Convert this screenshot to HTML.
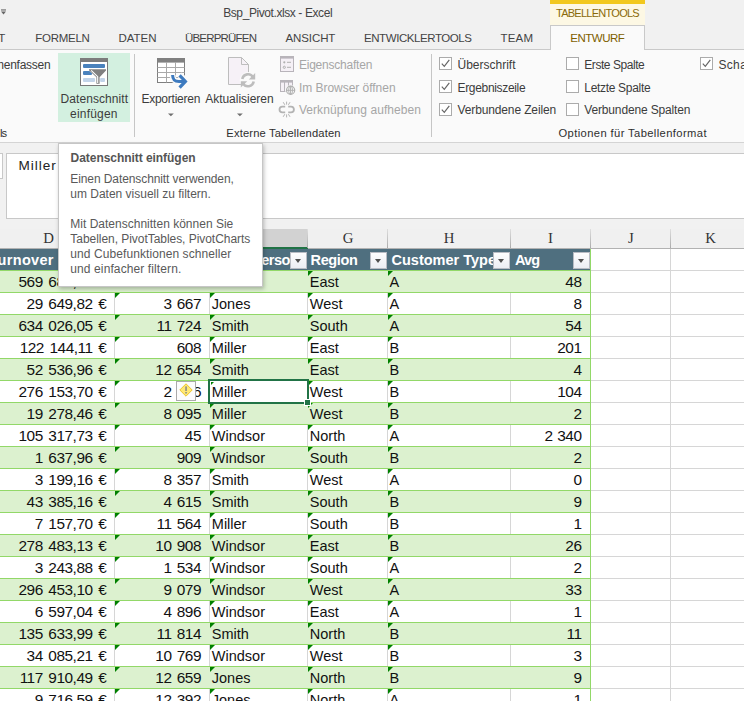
<!DOCTYPE html>
<html lang="de">
<head>
<meta charset="utf-8">
<title>Bsp_Pivot.xlsx - Excel</title>
<style>
html,body{margin:0;padding:0;width:744px;height:701px;overflow:hidden}
body{position:relative;background:#f1f1f1;font-family:"Liberation Sans",sans-serif}
#app{position:absolute;left:0;top:0;width:744px;height:701px;overflow:hidden}
.abs,.t,.row,.vl,.tri,.hl,.cb{position:absolute}
.t{white-space:pre;display:block}
#titlebar{left:0;top:0;width:744px;height:49px;background:#f1f1f1}
#ctxbar{left:550px;top:0;width:95px;height:4px;background:#f2c81e}
#ctxbg{left:550px;top:4px;width:95px;height:21px;background:#fdf8e4}
#ribbon{left:0;top:49px;width:744px;height:94px;background:#fafafa;border-top:1px solid #c9c9c9;border-bottom:1px solid #d4d4d4;box-sizing:border-box}
#tab{left:550px;top:25px;width:95px;height:25px;background:#fafafa;border:1px solid #c9c9c9;border-bottom:none;box-sizing:border-box}
#btnhl{left:58px;top:53px;width:72px;height:69px;background:#d3f0e0}
.sep{width:1px;background:#c6c6c6;top:54px;height:83px}
#fbar{left:6px;top:153px;width:740px;height:66px;background:#fff;border:1px solid #c8c8c8;box-sizing:border-box}
#namebox{left:-10px;top:153px;width:13px;height:26px;background:#fff;border:1px solid #c8c8c8;box-sizing:border-box}
#colhead{left:0;top:229px;width:744px;height:20px;background:#f0f0f0;border-bottom:1px solid #b2b2b2;box-sizing:border-box}
.cs{width:1px;top:229px;height:19px;background:linear-gradient(#dedede,#ababab)}
#colF{left:210px;top:229px;width:98px;height:18px;background:#d2d2d2;border-right:1px solid #b4b4b4;box-sizing:border-box}
#colFb{left:210px;top:247px;width:98px;height:2px;background:#217346}
#sheet{left:0;top:249px;width:744px;height:452px;background:#fff;overflow:hidden}
#grid{left:0;top:0;width:744px;height:701px}
.hl{left:590px;width:154px;height:1px;background:#d6d6d6}
.vg{width:1px;top:249px;height:452px;background:#d6d6d6}
#thead{left:0;top:249px;width:590px;height:22px;background:#4f6f7f;border-bottom:1px solid #92d868;box-sizing:border-box}
.row{left:0;width:590px;height:21px;border-bottom:1px solid #92d868}
.vl{width:1px;height:21px;background:#d6d6d6}
.tri{width:0;height:0;border-top:5px solid #008000;border-right:5px solid transparent}
#tright{left:590px;top:249px;width:1px;height:452px;background:#92d868}
.fb{position:absolute;top:252px;width:17px;height:17px;box-sizing:border-box;border:1px solid #b9bcc4;background:linear-gradient(#fdfdfe,#eceef4);}
.fb:after{content:"";position:absolute;left:4px;top:6px;border-left:3.5px solid transparent;border-right:3.5px solid transparent;border-top:4px solid #505050}
.clip{position:absolute;overflow:hidden;top:249px;height:21px}
.clip span{position:absolute;white-space:pre;color:#fff;font-weight:700;font-size:14.5px;line-height:14.5px;top:3.93px}
#sel{left:208px;top:379px;width:101px;height:25px;border:2px solid #217346;box-sizing:border-box;box-shadow:inset 0 0 0 1px #fff}
#selh{left:304px;top:399px;width:5px;height:5px;background:#217346;border:1px solid #fff;box-sizing:content-box}
#err{left:176px;top:381px;width:20px;height:20px;background:#fcfcfc;border:1px solid #ababab;box-sizing:border-box}
#tip{left:58px;top:143px;width:205px;height:144px;background:#fff;border:1px solid #c6c6c6;box-sizing:border-box;box-shadow:1px 2px 4px rgba(0,0,0,.25)}
.cb{width:13px;height:13px;box-sizing:border-box;border:1px solid #ababab;background:#fff}
.cb svg{position:absolute;left:0;top:0}
svg{position:absolute;overflow:visible}
</style>
</head>
<body>
<div id="app">
<div id="titlebar" class="abs"></div>
<div id="ctxbar" class="abs"></div>
<div id="ctxbg" class="abs"></div>
<div id="ribbon" class="abs"></div>
<div id="tab" class="abs"></div>
<!-- quick access arrow -->
<svg style="left:1px;top:6px" width="8" height="12" viewBox="0 0 8 12"><rect x="0" y="3.4" width="5" height="1.1" fill="#666"/><path d="M0 5.6h5L2.5 8.6z" fill="#666"/></svg>

<div id="btnhl" class="abs"></div>
<div class="abs sep" style="left:134px"></div>
<div class="abs sep" style="left:431px"></div>
<!-- Datenschnitt icon -->
<svg style="left:80px;top:58px" width="28" height="28" viewBox="0 0 28 28">
<rect x=".5" y=".5" width="27" height="27" fill="#fff" stroke="#787878"/>
<rect x="0" y="0" width="28" height="4" fill="#7c7c7c"/>
<rect x="3" y="6" width="22" height="4" rx="1" fill="#4a82bd"/>
<rect x="3" y="13" width="9" height="4" rx="1" fill="#4a82bd"/>
<rect x="3" y="20" width="12" height="4" rx="1" fill="#c2d4e9"/>
<rect x="20" y="20" width="5" height="4" rx="1" fill="#c2d4e9"/>
<path d="M9 11.2H26V12.6L19.6 19.2V25.8H16.4V19.2L9 12.2Z" fill="#808080" stroke="#fff" stroke-width="1" paint-order="stroke"/>
<path d="M11.2 12.4L17.7 18.7V25" fill="none" stroke="#fff" stroke-width="1.1"/>
</svg>
<!-- Exportieren icon -->
<svg style="left:157px;top:58px" width="32" height="32" viewBox="0 0 32 32">
<rect x=".5" y=".5" width="27" height="24" fill="#fff" stroke="#7e7e7e"/>
<rect x="0" y="0" width="28" height="4.6" fill="#808080"/>
<path d="M9.5 4V24.5M18.5 4V24.5M.5 9.5H27.5M.5 14.5H27.5M.5 19.5H27.5" stroke="#a9a9a9" fill="none"/>
<path d="M15.6 17C15.6 21.8 17.6 23.4 22 23.4H27.5" fill="none" stroke="#fafafa" stroke-width="6"/>
<path d="M22.6 16.6L29 23.4 22.6 30.6" fill="none" stroke="#fafafa" stroke-width="6"/>
<path d="M15.6 17C15.6 21.8 17.6 23.4 22 23.4H27.5" fill="none" stroke="#3d7abf" stroke-width="3"/>
<path d="M22.6 17.3L28.4 23.4 22.6 29.6" fill="none" stroke="#3d7abf" stroke-width="3.2"/>
</svg>
<svg style="left:167.6px;top:112.6px" width="8" height="5" viewBox="0 0 8 5"><path d="M0 .4H5.8L2.9 3.3z" fill="#6e6e6e"/></svg>
<!-- Aktualisieren icon -->
<svg style="left:228px;top:57px" width="30" height="32" viewBox="0 0 30 32">
<path d="M.5 .5H13.5L20.5 7.5V27.5H.5Z" fill="#f6f1f7" stroke="#bdbdbd"/>
<path d="M13.5 .5V7.5H20.5" fill="none" stroke="#bdbdbd"/>
<circle cx="20" cy="23.3" r="8.3" fill="#fafafa"/>
<path d="M14.3 22A5.8 5.8 0 0 1 25 20.2" fill="none" stroke="#bdbdbd" stroke-width="2.6"/>
<path d="M25.7 24.6A5.8 5.8 0 0 1 15 26.4" fill="none" stroke="#bdbdbd" stroke-width="2.6"/>
<path d="M27.2 16V22.4H20.8Z" fill="#bdbdbd"/>
<path d="M12.8 30.6V24.2H19.2Z" fill="#bdbdbd"/>
</svg>
<svg style="left:236.6px;top:112.6px" width="8" height="5" viewBox="0 0 8 5"><path d="M0 .4H5.8L2.9 3.3z" fill="#6e6e6e"/></svg>
<!-- small icons -->
<svg style="left:280px;top:56px" width="14" height="16" viewBox="0 0 14 16">
<rect x=".5" y=".5" width="13" height="15" fill="#f5f0f6" stroke="#b8b4ba"/>
<rect x="0" y="0" width="14" height="2.6" fill="#b8b4ba"/>
<circle cx="4.3" cy="6.3" r="1.1" fill="#b0b0b0"/><circle cx="4.3" cy="11.3" r="1.1" fill="none" stroke="#b0b0b0"/>
<path d="M7 6.3H11M7 11.3H11" stroke="#b0b0b0"/>
</svg>
<svg style="left:280px;top:80px" width="17" height="16" viewBox="0 0 17 16">
<rect x=".5" y=".5" width="12" height="11" fill="#f5f0f6" stroke="#b8b4ba"/>
<rect x="0" y="0" width="13" height="2.6" fill="#b8b4ba"/>
<path d="M4.5 2V11.5M8.5 2V11.5" stroke="#b8b4ba"/>
<circle cx="10.6" cy="10.3" r="5.4" fill="#fafafa"/>
<circle cx="10.6" cy="10.3" r="4.1" fill="#fafafa" stroke="#b0b0b0" stroke-width="1.2"/>
<path d="M6.6 10.3H14.6M10.6 6.3V14.3" stroke="#b0b0b0" stroke-width="1"/>
<ellipse cx="10.6" cy="10.3" rx="2" ry="4" fill="none" stroke="#b0b0b0" stroke-width=".9"/>
</svg>
<svg style="left:279px;top:101px" width="16" height="17" viewBox="0 0 16 17">
<path d="M6.2 5.6H3.4A2.9 2.9 0 0 0 3.4 11.4H6.2" fill="none" stroke="#b3b3b3" stroke-width="1.8"/>
<path d="M9.2 5.6H12A2.9 2.9 0 0 1 12 11.4H9.2" fill="none" stroke="#b3b3b3" stroke-width="1.8"/>
<path d="M7.6 .6V3.6M4.2 1.2L5.8 3.8M11 1.2L9.4 3.8M7.6 16.4V13.4M4.2 15.8L5.8 13.2M11 15.8L9.4 13.2" stroke="#b3b3b3" stroke-width="1"/>
</svg>

<!-- checkboxes -->
<div class="cb" style="left:439px;top:57px"><svg width="13" height="13" viewBox="0 0 13 13" style="left:-1px;top:-1px"><path d="M2.8 6.6L5.3 9.3 10.3 2.9" fill="none" stroke="#666" stroke-width="1.2"/></svg></div><div class="cb" style="left:439px;top:80px"><svg width="13" height="13" viewBox="0 0 13 13" style="left:-1px;top:-1px"><path d="M2.8 6.6L5.3 9.3 10.3 2.9" fill="none" stroke="#666" stroke-width="1.2"/></svg></div><div class="cb" style="left:439px;top:103px"><svg width="13" height="13" viewBox="0 0 13 13" style="left:-1px;top:-1px"><path d="M2.8 6.6L5.3 9.3 10.3 2.9" fill="none" stroke="#666" stroke-width="1.2"/></svg></div><div class="cb" style="left:566px;top:57px"></div><div class="cb" style="left:566px;top:80px"></div><div class="cb" style="left:566px;top:103px"></div><div class="cb" style="left:700px;top:57px"><svg width="13" height="13" viewBox="0 0 13 13" style="left:-1px;top:-1px"><path d="M2.8 6.6L5.3 9.3 10.3 2.9" fill="none" stroke="#666" stroke-width="1.2"/></svg></div>

<div id="namebox" class="abs"></div>
<div id="fbar" class="abs"></div>
<div id="colhead" class="abs"></div>
<div id="colF" class="abs"></div><div id="colFb" class="abs"></div>
<div class="abs cs" style="left:114px"></div><div class="abs cs" style="left:209px"></div><div class="abs cs" style="left:307px"></div><div class="abs cs" style="left:387px"></div><div class="abs cs" style="left:510px"></div><div class="abs cs" style="left:590px"></div><div class="abs cs" style="left:670px"></div>

<div id="sheet" class="abs"></div>
<div id="grid" class="abs">
<div class="hl" style="top:270px"></div><div class="hl" style="top:292px"></div><div class="hl" style="top:314px"></div><div class="hl" style="top:336px"></div><div class="hl" style="top:358px"></div><div class="hl" style="top:380px"></div><div class="hl" style="top:402px"></div><div class="hl" style="top:424px"></div><div class="hl" style="top:446px"></div><div class="hl" style="top:468px"></div><div class="hl" style="top:490px"></div><div class="hl" style="top:512px"></div><div class="hl" style="top:534px"></div><div class="hl" style="top:556px"></div><div class="hl" style="top:578px"></div><div class="hl" style="top:600px"></div><div class="hl" style="top:622px"></div><div class="hl" style="top:644px"></div><div class="hl" style="top:666px"></div><div class="hl" style="top:688px"></div>
<div class="abs vg" style="left:670px"></div>
<div id="thead" class="abs"></div>
<div class="row" style="top:271px;background:#dcf1cf"></div>
<div class="row" style="top:293px;background:#fff"></div>
<div class="row" style="top:315px;background:#dcf1cf"></div>
<div class="row" style="top:337px;background:#fff"></div>
<div class="row" style="top:359px;background:#dcf1cf"></div>
<div class="row" style="top:381px;background:#fff"></div>
<div class="row" style="top:403px;background:#dcf1cf"></div>
<div class="row" style="top:425px;background:#fff"></div>
<div class="row" style="top:447px;background:#dcf1cf"></div>
<div class="row" style="top:469px;background:#fff"></div>
<div class="row" style="top:491px;background:#dcf1cf"></div>
<div class="row" style="top:513px;background:#fff"></div>
<div class="row" style="top:535px;background:#dcf1cf"></div>
<div class="row" style="top:557px;background:#fff"></div>
<div class="row" style="top:579px;background:#dcf1cf"></div>
<div class="row" style="top:601px;background:#fff"></div>
<div class="row" style="top:623px;background:#dcf1cf"></div>
<div class="row" style="top:645px;background:#fff"></div>
<div class="row" style="top:667px;background:#dcf1cf"></div>
<div class="row" style="top:689px;background:#fff"></div>
<div class="vl" style="left:114px;top:293px"></div>
<div class="vl" style="left:209px;top:293px"></div>
<div class="vl" style="left:307px;top:293px"></div>
<div class="vl" style="left:387px;top:293px"></div>
<div class="vl" style="left:510px;top:293px"></div>
<div class="vl" style="left:114px;top:337px"></div>
<div class="vl" style="left:209px;top:337px"></div>
<div class="vl" style="left:307px;top:337px"></div>
<div class="vl" style="left:387px;top:337px"></div>
<div class="vl" style="left:510px;top:337px"></div>
<div class="vl" style="left:114px;top:381px"></div>
<div class="vl" style="left:209px;top:381px"></div>
<div class="vl" style="left:307px;top:381px"></div>
<div class="vl" style="left:387px;top:381px"></div>
<div class="vl" style="left:510px;top:381px"></div>
<div class="vl" style="left:114px;top:425px"></div>
<div class="vl" style="left:209px;top:425px"></div>
<div class="vl" style="left:307px;top:425px"></div>
<div class="vl" style="left:387px;top:425px"></div>
<div class="vl" style="left:510px;top:425px"></div>
<div class="vl" style="left:114px;top:469px"></div>
<div class="vl" style="left:209px;top:469px"></div>
<div class="vl" style="left:307px;top:469px"></div>
<div class="vl" style="left:387px;top:469px"></div>
<div class="vl" style="left:510px;top:469px"></div>
<div class="vl" style="left:114px;top:513px"></div>
<div class="vl" style="left:209px;top:513px"></div>
<div class="vl" style="left:307px;top:513px"></div>
<div class="vl" style="left:387px;top:513px"></div>
<div class="vl" style="left:510px;top:513px"></div>
<div class="vl" style="left:114px;top:557px"></div>
<div class="vl" style="left:209px;top:557px"></div>
<div class="vl" style="left:307px;top:557px"></div>
<div class="vl" style="left:387px;top:557px"></div>
<div class="vl" style="left:510px;top:557px"></div>
<div class="vl" style="left:114px;top:601px"></div>
<div class="vl" style="left:209px;top:601px"></div>
<div class="vl" style="left:307px;top:601px"></div>
<div class="vl" style="left:387px;top:601px"></div>
<div class="vl" style="left:510px;top:601px"></div>
<div class="vl" style="left:114px;top:645px"></div>
<div class="vl" style="left:209px;top:645px"></div>
<div class="vl" style="left:307px;top:645px"></div>
<div class="vl" style="left:387px;top:645px"></div>
<div class="vl" style="left:510px;top:645px"></div>
<div class="vl" style="left:114px;top:689px"></div>
<div class="vl" style="left:209px;top:689px"></div>
<div class="vl" style="left:307px;top:689px"></div>
<div class="vl" style="left:387px;top:689px"></div>
<div class="vl" style="left:510px;top:689px"></div>
<i class="tri" style="left:115px;top:271px"></i>
<i class="tri" style="left:210px;top:271px"></i>
<i class="tri" style="left:308px;top:271px"></i>
<i class="tri" style="left:388px;top:271px"></i>
<i class="tri" style="left:115px;top:293px"></i>
<i class="tri" style="left:210px;top:293px"></i>
<i class="tri" style="left:308px;top:293px"></i>
<i class="tri" style="left:388px;top:293px"></i>
<i class="tri" style="left:115px;top:315px"></i>
<i class="tri" style="left:210px;top:315px"></i>
<i class="tri" style="left:308px;top:315px"></i>
<i class="tri" style="left:388px;top:315px"></i>
<i class="tri" style="left:115px;top:337px"></i>
<i class="tri" style="left:210px;top:337px"></i>
<i class="tri" style="left:308px;top:337px"></i>
<i class="tri" style="left:388px;top:337px"></i>
<i class="tri" style="left:115px;top:359px"></i>
<i class="tri" style="left:210px;top:359px"></i>
<i class="tri" style="left:308px;top:359px"></i>
<i class="tri" style="left:388px;top:359px"></i>
<i class="tri" style="left:115px;top:381px"></i>
<i class="tri" style="left:210px;top:381px"></i>
<i class="tri" style="left:308px;top:381px"></i>
<i class="tri" style="left:388px;top:381px"></i>
<i class="tri" style="left:115px;top:403px"></i>
<i class="tri" style="left:210px;top:403px"></i>
<i class="tri" style="left:308px;top:403px"></i>
<i class="tri" style="left:388px;top:403px"></i>
<i class="tri" style="left:115px;top:425px"></i>
<i class="tri" style="left:210px;top:425px"></i>
<i class="tri" style="left:308px;top:425px"></i>
<i class="tri" style="left:388px;top:425px"></i>
<i class="tri" style="left:115px;top:447px"></i>
<i class="tri" style="left:210px;top:447px"></i>
<i class="tri" style="left:308px;top:447px"></i>
<i class="tri" style="left:388px;top:447px"></i>
<i class="tri" style="left:115px;top:469px"></i>
<i class="tri" style="left:210px;top:469px"></i>
<i class="tri" style="left:308px;top:469px"></i>
<i class="tri" style="left:388px;top:469px"></i>
<i class="tri" style="left:115px;top:491px"></i>
<i class="tri" style="left:210px;top:491px"></i>
<i class="tri" style="left:308px;top:491px"></i>
<i class="tri" style="left:388px;top:491px"></i>
<i class="tri" style="left:115px;top:513px"></i>
<i class="tri" style="left:210px;top:513px"></i>
<i class="tri" style="left:308px;top:513px"></i>
<i class="tri" style="left:388px;top:513px"></i>
<i class="tri" style="left:115px;top:535px"></i>
<i class="tri" style="left:210px;top:535px"></i>
<i class="tri" style="left:308px;top:535px"></i>
<i class="tri" style="left:388px;top:535px"></i>
<i class="tri" style="left:115px;top:557px"></i>
<i class="tri" style="left:210px;top:557px"></i>
<i class="tri" style="left:308px;top:557px"></i>
<i class="tri" style="left:388px;top:557px"></i>
<i class="tri" style="left:115px;top:579px"></i>
<i class="tri" style="left:210px;top:579px"></i>
<i class="tri" style="left:308px;top:579px"></i>
<i class="tri" style="left:388px;top:579px"></i>
<i class="tri" style="left:115px;top:601px"></i>
<i class="tri" style="left:210px;top:601px"></i>
<i class="tri" style="left:308px;top:601px"></i>
<i class="tri" style="left:388px;top:601px"></i>
<i class="tri" style="left:115px;top:623px"></i>
<i class="tri" style="left:210px;top:623px"></i>
<i class="tri" style="left:308px;top:623px"></i>
<i class="tri" style="left:388px;top:623px"></i>
<i class="tri" style="left:115px;top:645px"></i>
<i class="tri" style="left:210px;top:645px"></i>
<i class="tri" style="left:308px;top:645px"></i>
<i class="tri" style="left:388px;top:645px"></i>
<i class="tri" style="left:115px;top:667px"></i>
<i class="tri" style="left:210px;top:667px"></i>
<i class="tri" style="left:308px;top:667px"></i>
<i class="tri" style="left:388px;top:667px"></i>
<i class="tri" style="left:115px;top:689px"></i>
<i class="tri" style="left:210px;top:689px"></i>
<i class="tri" style="left:308px;top:689px"></i>
<i class="tri" style="left:388px;top:689px"></i>
<div id="tright" class="abs"></div>
<div class="clip" style="left:209px;width:81px"><span style="left:8.5px;letter-spacing:-.5px">Salesperson</span></div>
<div class="clip" style="left:387px;width:106px"><span style="left:4.5px">Customer Type</span></div>
<div class="fb" style="left:290px"></div>
<div class="fb" style="left:370px"></div>
<div class="fb" style="left:493px"></div>
<div class="fb" style="left:573px"></div>
<span class="t" style="top:252.93px;font-size:14.5px;line-height:14.5px;color:#fff;font-weight:700;letter-spacing:0.317px;left:-10.50px;">Turnover</span>
<span class="t" style="top:252.93px;font-size:14.5px;line-height:14.5px;color:#fff;font-weight:700;letter-spacing:-0.388px;left:310.60px;">Region</span>
<span class="t" style="top:252.93px;font-size:14.5px;line-height:14.5px;color:#fff;font-weight:700;letter-spacing:-0.930px;left:515.00px;">Avg</span>
<span class="t" style="top:273.96px;font-size:15.4px;line-height:15.4px;color:#111;letter-spacing:-0.480px;word-spacing:1.8px;right:637.78px;">569 687,35 €</span>
<span class="t" style="top:273.96px;font-size:15.4px;line-height:15.4px;color:#111;letter-spacing:-0.480px;word-spacing:1.5px;right:542.98px;">7 891</span>
<span class="t" style="top:274.73px;font-size:14.5px;line-height:14.5px;color:#111;left:211.80px;">Jones</span>
<span class="t" style="top:274.73px;font-size:14.5px;line-height:14.5px;color:#111;left:309.80px;">East</span>
<span class="t" style="top:274.73px;font-size:14.5px;line-height:14.5px;color:#111;left:389.60px;">A</span>
<span class="t" style="top:273.96px;font-size:15.4px;line-height:15.4px;color:#111;letter-spacing:-0.480px;word-spacing:1.0px;right:162.48px;">48</span>
<span class="t" style="top:295.96px;font-size:15.4px;line-height:15.4px;color:#111;letter-spacing:-0.480px;word-spacing:1.8px;right:637.78px;">29 649,82 €</span>
<span class="t" style="top:295.96px;font-size:15.4px;line-height:15.4px;color:#111;letter-spacing:-0.480px;word-spacing:1.5px;right:542.98px;">3 667</span>
<span class="t" style="top:296.73px;font-size:14.5px;line-height:14.5px;color:#111;left:211.80px;">Jones</span>
<span class="t" style="top:296.73px;font-size:14.5px;line-height:14.5px;color:#111;left:309.80px;">West</span>
<span class="t" style="top:296.73px;font-size:14.5px;line-height:14.5px;color:#111;left:389.60px;">A</span>
<span class="t" style="top:295.96px;font-size:15.4px;line-height:15.4px;color:#111;letter-spacing:-0.480px;word-spacing:1.0px;right:162.48px;">8</span>
<span class="t" style="top:317.96px;font-size:15.4px;line-height:15.4px;color:#111;letter-spacing:-0.480px;word-spacing:1.8px;right:637.78px;">634 026,05 €</span>
<span class="t" style="top:317.96px;font-size:15.4px;line-height:15.4px;color:#111;letter-spacing:-0.480px;word-spacing:1.5px;right:542.98px;">11 724</span>
<span class="t" style="top:318.73px;font-size:14.5px;line-height:14.5px;color:#111;left:211.80px;">Smith</span>
<span class="t" style="top:318.73px;font-size:14.5px;line-height:14.5px;color:#111;left:309.80px;">South</span>
<span class="t" style="top:318.73px;font-size:14.5px;line-height:14.5px;color:#111;left:389.60px;">A</span>
<span class="t" style="top:317.96px;font-size:15.4px;line-height:15.4px;color:#111;letter-spacing:-0.480px;word-spacing:1.0px;right:162.48px;">54</span>
<span class="t" style="top:339.96px;font-size:15.4px;line-height:15.4px;color:#111;letter-spacing:-0.480px;word-spacing:1.8px;right:637.78px;">122 144,11 €</span>
<span class="t" style="top:339.96px;font-size:15.4px;line-height:15.4px;color:#111;letter-spacing:-0.480px;word-spacing:1.5px;right:542.98px;">608</span>
<span class="t" style="top:340.73px;font-size:14.5px;line-height:14.5px;color:#111;left:211.80px;">Miller</span>
<span class="t" style="top:340.73px;font-size:14.5px;line-height:14.5px;color:#111;left:309.80px;">East</span>
<span class="t" style="top:340.73px;font-size:14.5px;line-height:14.5px;color:#111;left:389.60px;">B</span>
<span class="t" style="top:339.96px;font-size:15.4px;line-height:15.4px;color:#111;letter-spacing:-0.480px;word-spacing:1.0px;right:162.48px;">201</span>
<span class="t" style="top:361.96px;font-size:15.4px;line-height:15.4px;color:#111;letter-spacing:-0.480px;word-spacing:1.8px;right:637.78px;">52 536,96 €</span>
<span class="t" style="top:361.96px;font-size:15.4px;line-height:15.4px;color:#111;letter-spacing:-0.480px;word-spacing:1.5px;right:542.98px;">12 654</span>
<span class="t" style="top:362.73px;font-size:14.5px;line-height:14.5px;color:#111;left:211.80px;">Smith</span>
<span class="t" style="top:362.73px;font-size:14.5px;line-height:14.5px;color:#111;left:309.80px;">East</span>
<span class="t" style="top:362.73px;font-size:14.5px;line-height:14.5px;color:#111;left:389.60px;">B</span>
<span class="t" style="top:361.96px;font-size:15.4px;line-height:15.4px;color:#111;letter-spacing:-0.480px;word-spacing:1.0px;right:162.48px;">4</span>
<span class="t" style="top:383.96px;font-size:15.4px;line-height:15.4px;color:#111;letter-spacing:-0.480px;word-spacing:1.8px;right:637.78px;">276 153,70 €</span>
<span class="t" style="top:383.96px;font-size:15.4px;line-height:15.4px;color:#111;letter-spacing:-0.480px;word-spacing:1.5px;right:542.98px;">2 386</span>
<span class="t" style="top:384.73px;font-size:14.5px;line-height:14.5px;color:#111;left:211.80px;">Miller</span>
<span class="t" style="top:384.73px;font-size:14.5px;line-height:14.5px;color:#111;left:309.80px;">West</span>
<span class="t" style="top:384.73px;font-size:14.5px;line-height:14.5px;color:#111;left:389.60px;">B</span>
<span class="t" style="top:383.96px;font-size:15.4px;line-height:15.4px;color:#111;letter-spacing:-0.480px;word-spacing:1.0px;right:162.48px;">104</span>
<span class="t" style="top:405.96px;font-size:15.4px;line-height:15.4px;color:#111;letter-spacing:-0.480px;word-spacing:1.8px;right:637.78px;">19 278,46 €</span>
<span class="t" style="top:405.96px;font-size:15.4px;line-height:15.4px;color:#111;letter-spacing:-0.480px;word-spacing:1.5px;right:542.98px;">8 095</span>
<span class="t" style="top:406.73px;font-size:14.5px;line-height:14.5px;color:#111;left:211.80px;">Miller</span>
<span class="t" style="top:406.73px;font-size:14.5px;line-height:14.5px;color:#111;left:309.80px;">West</span>
<span class="t" style="top:406.73px;font-size:14.5px;line-height:14.5px;color:#111;left:389.60px;">B</span>
<span class="t" style="top:405.96px;font-size:15.4px;line-height:15.4px;color:#111;letter-spacing:-0.480px;word-spacing:1.0px;right:162.48px;">2</span>
<span class="t" style="top:427.96px;font-size:15.4px;line-height:15.4px;color:#111;letter-spacing:-0.480px;word-spacing:1.8px;right:637.78px;">105 317,73 €</span>
<span class="t" style="top:427.96px;font-size:15.4px;line-height:15.4px;color:#111;letter-spacing:-0.480px;word-spacing:1.5px;right:542.98px;">45</span>
<span class="t" style="top:428.73px;font-size:14.5px;line-height:14.5px;color:#111;left:211.80px;">Windsor</span>
<span class="t" style="top:428.73px;font-size:14.5px;line-height:14.5px;color:#111;left:309.80px;">North</span>
<span class="t" style="top:428.73px;font-size:14.5px;line-height:14.5px;color:#111;left:389.60px;">A</span>
<span class="t" style="top:427.96px;font-size:15.4px;line-height:15.4px;color:#111;letter-spacing:-0.480px;word-spacing:1.0px;right:162.48px;">2 340</span>
<span class="t" style="top:449.96px;font-size:15.4px;line-height:15.4px;color:#111;letter-spacing:-0.480px;word-spacing:1.8px;right:637.78px;">1 637,96 €</span>
<span class="t" style="top:449.96px;font-size:15.4px;line-height:15.4px;color:#111;letter-spacing:-0.480px;word-spacing:1.5px;right:542.98px;">909</span>
<span class="t" style="top:450.73px;font-size:14.5px;line-height:14.5px;color:#111;left:211.80px;">Windsor</span>
<span class="t" style="top:450.73px;font-size:14.5px;line-height:14.5px;color:#111;left:309.80px;">South</span>
<span class="t" style="top:450.73px;font-size:14.5px;line-height:14.5px;color:#111;left:389.60px;">B</span>
<span class="t" style="top:449.96px;font-size:15.4px;line-height:15.4px;color:#111;letter-spacing:-0.480px;word-spacing:1.0px;right:162.48px;">2</span>
<span class="t" style="top:471.96px;font-size:15.4px;line-height:15.4px;color:#111;letter-spacing:-0.480px;word-spacing:1.8px;right:637.78px;">3 199,16 €</span>
<span class="t" style="top:471.96px;font-size:15.4px;line-height:15.4px;color:#111;letter-spacing:-0.480px;word-spacing:1.5px;right:542.98px;">8 357</span>
<span class="t" style="top:472.73px;font-size:14.5px;line-height:14.5px;color:#111;left:211.80px;">Smith</span>
<span class="t" style="top:472.73px;font-size:14.5px;line-height:14.5px;color:#111;left:309.80px;">West</span>
<span class="t" style="top:472.73px;font-size:14.5px;line-height:14.5px;color:#111;left:389.60px;">A</span>
<span class="t" style="top:471.96px;font-size:15.4px;line-height:15.4px;color:#111;letter-spacing:-0.480px;word-spacing:1.0px;right:162.48px;">0</span>
<span class="t" style="top:493.96px;font-size:15.4px;line-height:15.4px;color:#111;letter-spacing:-0.480px;word-spacing:1.8px;right:637.78px;">43 385,16 €</span>
<span class="t" style="top:493.96px;font-size:15.4px;line-height:15.4px;color:#111;letter-spacing:-0.480px;word-spacing:1.5px;right:542.98px;">4 615</span>
<span class="t" style="top:494.73px;font-size:14.5px;line-height:14.5px;color:#111;left:211.80px;">Smith</span>
<span class="t" style="top:494.73px;font-size:14.5px;line-height:14.5px;color:#111;left:309.80px;">South</span>
<span class="t" style="top:494.73px;font-size:14.5px;line-height:14.5px;color:#111;left:389.60px;">B</span>
<span class="t" style="top:493.96px;font-size:15.4px;line-height:15.4px;color:#111;letter-spacing:-0.480px;word-spacing:1.0px;right:162.48px;">9</span>
<span class="t" style="top:515.96px;font-size:15.4px;line-height:15.4px;color:#111;letter-spacing:-0.480px;word-spacing:1.8px;right:637.78px;">7 157,70 €</span>
<span class="t" style="top:515.96px;font-size:15.4px;line-height:15.4px;color:#111;letter-spacing:-0.480px;word-spacing:1.5px;right:542.98px;">11 564</span>
<span class="t" style="top:516.73px;font-size:14.5px;line-height:14.5px;color:#111;left:211.80px;">Miller</span>
<span class="t" style="top:516.73px;font-size:14.5px;line-height:14.5px;color:#111;left:309.80px;">South</span>
<span class="t" style="top:516.73px;font-size:14.5px;line-height:14.5px;color:#111;left:389.60px;">B</span>
<span class="t" style="top:515.96px;font-size:15.4px;line-height:15.4px;color:#111;letter-spacing:-0.480px;word-spacing:1.0px;right:162.48px;">1</span>
<span class="t" style="top:537.96px;font-size:15.4px;line-height:15.4px;color:#111;letter-spacing:-0.480px;word-spacing:1.8px;right:637.78px;">278 483,13 €</span>
<span class="t" style="top:537.96px;font-size:15.4px;line-height:15.4px;color:#111;letter-spacing:-0.480px;word-spacing:1.5px;right:542.98px;">10 908</span>
<span class="t" style="top:538.73px;font-size:14.5px;line-height:14.5px;color:#111;left:211.80px;">Windsor</span>
<span class="t" style="top:538.73px;font-size:14.5px;line-height:14.5px;color:#111;left:309.80px;">East</span>
<span class="t" style="top:538.73px;font-size:14.5px;line-height:14.5px;color:#111;left:389.60px;">B</span>
<span class="t" style="top:537.96px;font-size:15.4px;line-height:15.4px;color:#111;letter-spacing:-0.480px;word-spacing:1.0px;right:162.48px;">26</span>
<span class="t" style="top:559.96px;font-size:15.4px;line-height:15.4px;color:#111;letter-spacing:-0.480px;word-spacing:1.8px;right:637.78px;">3 243,88 €</span>
<span class="t" style="top:559.96px;font-size:15.4px;line-height:15.4px;color:#111;letter-spacing:-0.480px;word-spacing:1.5px;right:542.98px;">1 534</span>
<span class="t" style="top:560.73px;font-size:14.5px;line-height:14.5px;color:#111;left:211.80px;">Windsor</span>
<span class="t" style="top:560.73px;font-size:14.5px;line-height:14.5px;color:#111;left:309.80px;">South</span>
<span class="t" style="top:560.73px;font-size:14.5px;line-height:14.5px;color:#111;left:389.60px;">A</span>
<span class="t" style="top:559.96px;font-size:15.4px;line-height:15.4px;color:#111;letter-spacing:-0.480px;word-spacing:1.0px;right:162.48px;">2</span>
<span class="t" style="top:581.96px;font-size:15.4px;line-height:15.4px;color:#111;letter-spacing:-0.480px;word-spacing:1.8px;right:637.78px;">296 453,10 €</span>
<span class="t" style="top:581.96px;font-size:15.4px;line-height:15.4px;color:#111;letter-spacing:-0.480px;word-spacing:1.5px;right:542.98px;">9 079</span>
<span class="t" style="top:582.73px;font-size:14.5px;line-height:14.5px;color:#111;left:211.80px;">Windsor</span>
<span class="t" style="top:582.73px;font-size:14.5px;line-height:14.5px;color:#111;left:309.80px;">West</span>
<span class="t" style="top:582.73px;font-size:14.5px;line-height:14.5px;color:#111;left:389.60px;">A</span>
<span class="t" style="top:581.96px;font-size:15.4px;line-height:15.4px;color:#111;letter-spacing:-0.480px;word-spacing:1.0px;right:162.48px;">33</span>
<span class="t" style="top:603.96px;font-size:15.4px;line-height:15.4px;color:#111;letter-spacing:-0.480px;word-spacing:1.8px;right:637.78px;">6 597,04 €</span>
<span class="t" style="top:603.96px;font-size:15.4px;line-height:15.4px;color:#111;letter-spacing:-0.480px;word-spacing:1.5px;right:542.98px;">4 896</span>
<span class="t" style="top:604.73px;font-size:14.5px;line-height:14.5px;color:#111;left:211.80px;">Windsor</span>
<span class="t" style="top:604.73px;font-size:14.5px;line-height:14.5px;color:#111;left:309.80px;">East</span>
<span class="t" style="top:604.73px;font-size:14.5px;line-height:14.5px;color:#111;left:389.60px;">A</span>
<span class="t" style="top:603.96px;font-size:15.4px;line-height:15.4px;color:#111;letter-spacing:-0.480px;word-spacing:1.0px;right:162.48px;">1</span>
<span class="t" style="top:625.96px;font-size:15.4px;line-height:15.4px;color:#111;letter-spacing:-0.480px;word-spacing:1.8px;right:637.78px;">135 633,99 €</span>
<span class="t" style="top:625.96px;font-size:15.4px;line-height:15.4px;color:#111;letter-spacing:-0.480px;word-spacing:1.5px;right:542.98px;">11 814</span>
<span class="t" style="top:626.73px;font-size:14.5px;line-height:14.5px;color:#111;left:211.80px;">Smith</span>
<span class="t" style="top:626.73px;font-size:14.5px;line-height:14.5px;color:#111;left:309.80px;">North</span>
<span class="t" style="top:626.73px;font-size:14.5px;line-height:14.5px;color:#111;left:389.60px;">B</span>
<span class="t" style="top:625.96px;font-size:15.4px;line-height:15.4px;color:#111;letter-spacing:-0.480px;word-spacing:1.0px;right:162.48px;">11</span>
<span class="t" style="top:647.96px;font-size:15.4px;line-height:15.4px;color:#111;letter-spacing:-0.480px;word-spacing:1.8px;right:637.78px;">34 085,21 €</span>
<span class="t" style="top:647.96px;font-size:15.4px;line-height:15.4px;color:#111;letter-spacing:-0.480px;word-spacing:1.5px;right:542.98px;">10 769</span>
<span class="t" style="top:648.73px;font-size:14.5px;line-height:14.5px;color:#111;left:211.80px;">Windsor</span>
<span class="t" style="top:648.73px;font-size:14.5px;line-height:14.5px;color:#111;left:309.80px;">West</span>
<span class="t" style="top:648.73px;font-size:14.5px;line-height:14.5px;color:#111;left:389.60px;">B</span>
<span class="t" style="top:647.96px;font-size:15.4px;line-height:15.4px;color:#111;letter-spacing:-0.480px;word-spacing:1.0px;right:162.48px;">3</span>
<span class="t" style="top:669.96px;font-size:15.4px;line-height:15.4px;color:#111;letter-spacing:-0.480px;word-spacing:1.8px;right:637.78px;">117 910,49 €</span>
<span class="t" style="top:669.96px;font-size:15.4px;line-height:15.4px;color:#111;letter-spacing:-0.480px;word-spacing:1.5px;right:542.98px;">12 659</span>
<span class="t" style="top:670.73px;font-size:14.5px;line-height:14.5px;color:#111;left:211.80px;">Jones</span>
<span class="t" style="top:670.73px;font-size:14.5px;line-height:14.5px;color:#111;left:309.80px;">North</span>
<span class="t" style="top:670.73px;font-size:14.5px;line-height:14.5px;color:#111;left:389.60px;">B</span>
<span class="t" style="top:669.96px;font-size:15.4px;line-height:15.4px;color:#111;letter-spacing:-0.480px;word-spacing:1.0px;right:162.48px;">9</span>
<span class="t" style="top:691.96px;font-size:15.4px;line-height:15.4px;color:#111;letter-spacing:-0.480px;word-spacing:1.8px;right:637.78px;">9 716,59 €</span>
<span class="t" style="top:691.96px;font-size:15.4px;line-height:15.4px;color:#111;letter-spacing:-0.480px;word-spacing:1.5px;right:542.98px;">12 392</span>
<span class="t" style="top:692.73px;font-size:14.5px;line-height:14.5px;color:#111;left:211.80px;">Jones</span>
<span class="t" style="top:692.73px;font-size:14.5px;line-height:14.5px;color:#111;left:309.80px;">North</span>
<span class="t" style="top:692.73px;font-size:14.5px;line-height:14.5px;color:#111;left:389.60px;">A</span>
<span class="t" style="top:691.96px;font-size:15.4px;line-height:15.4px;color:#111;letter-spacing:-0.480px;word-spacing:1.0px;right:162.48px;">1</span>
<div id="sel" class="abs"></div>
<div id="selh" class="abs"></div>
<div id="err" class="abs"><svg style="left:2px;top:1.3px" width="14" height="14" viewBox="0 0 14 14"><path d="M7 .8L13.2 7 7 13.2.8 7z" fill="#ffe873" stroke="#ecc52c" stroke-width="1"/><rect x="6.3" y="3.4" width="1.5" height="4.6" fill="#858585"/><rect x="6.3" y="9" width="1.5" height="1.5" fill="#858585"/></svg></div>
</div>
<span class="t" style="top:6.64px;font-size:12px;line-height:12px;color:#444;letter-spacing:-0.412px;left:223.20px;">Bsp_Pivot.xlsx - Excel</span>
<span class="t" style="top:32.67px;font-size:11.5px;line-height:11.5px;color:#444;left:-1.80px;">T</span>
<span class="t" style="top:32.67px;font-size:11.5px;line-height:11.5px;color:#444;letter-spacing:-0.289px;left:35.30px;">FORMELN</span>
<span class="t" style="top:32.67px;font-size:11.5px;line-height:11.5px;color:#444;letter-spacing:-0.031px;left:118.50px;">DATEN</span>
<span class="t" style="top:32.67px;font-size:11.5px;line-height:11.5px;color:#444;letter-spacing:-0.804px;left:185.00px;">ÜBERPRÜFEN</span>
<span class="t" style="top:32.67px;font-size:11.5px;line-height:11.5px;color:#444;letter-spacing:-0.081px;left:285.40px;">ANSICHT</span>
<span class="t" style="top:32.67px;font-size:11.5px;line-height:11.5px;color:#444;letter-spacing:-0.426px;left:364.00px;">ENTWICKLERTOOLS</span>
<span class="t" style="top:32.67px;font-size:11.5px;line-height:11.5px;color:#444;letter-spacing:0.182px;left:500.50px;">TEAM</span>
<span class="t" style="top:32.67px;font-size:11.5px;line-height:11.5px;color:#7f6000;letter-spacing:-0.483px;left:570.30px;">ENTWURF</span>
<span class="t" style="top:7.59px;font-size:11px;line-height:11px;color:#8a6a0a;letter-spacing:-0.736px;left:556.00px;">TABELLENTOOLS</span>
<span class="t" style="top:58.74px;font-size:12px;line-height:12px;color:#3c3c3c;letter-spacing:-0.263px;left:-6.00px;">menfassen</span>
<span class="t" style="top:128.22px;font-size:11.2px;line-height:11.2px;color:#2e2e2e;letter-spacing:-1.094px;left:0.00px;">ls</span>
<span class="t" style="top:93.14px;font-size:12px;line-height:12px;color:#3c3c3c;letter-spacing:0.072px;left:60.50px;">Datenschnitt</span>
<span class="t" style="top:108.24px;font-size:12px;line-height:12px;color:#3c3c3c;letter-spacing:0.208px;left:70.00px;">einfügen</span>
<span class="t" style="top:92.54px;font-size:12px;line-height:12px;color:#3c3c3c;letter-spacing:-0.237px;left:141.40px;">Exportieren</span>
<span class="t" style="top:92.54px;font-size:12px;line-height:12px;color:#3c3c3c;letter-spacing:-0.025px;left:205.20px;">Aktualisieren</span>
<span class="t" style="top:58.74px;font-size:12px;line-height:12px;color:#a6a6a6;letter-spacing:-0.214px;left:298.90px;">Eigenschaften</span>
<span class="t" style="top:81.74px;font-size:12px;line-height:12px;color:#a6a6a6;letter-spacing:-0.029px;left:298.90px;">Im Browser öffnen</span>
<span class="t" style="top:104.34px;font-size:12px;line-height:12px;color:#a6a6a6;letter-spacing:0.069px;left:298.90px;">Verknüpfung aufheben</span>
<span class="t" style="top:128.22px;font-size:11.2px;line-height:11.2px;color:#2e2e2e;letter-spacing:0.153px;left:226.30px;">Externe Tabellendaten</span>
<span class="t" style="top:58.74px;font-size:12px;line-height:12px;color:#3c3c3c;left:457.50px;">Überschrift</span>
<span class="t" style="top:81.54px;font-size:12px;line-height:12px;color:#3c3c3c;letter-spacing:-0.329px;left:457.50px;">Ergebniszeile</span>
<span class="t" style="top:104.34px;font-size:12px;line-height:12px;color:#3c3c3c;letter-spacing:-0.128px;left:457.50px;">Verbundene Zeilen</span>
<span class="t" style="top:58.74px;font-size:12px;line-height:12px;color:#3c3c3c;letter-spacing:-0.443px;left:584.30px;">Erste Spalte</span>
<span class="t" style="top:81.54px;font-size:12px;line-height:12px;color:#3c3c3c;letter-spacing:-0.314px;left:584.30px;">Letzte Spalte</span>
<span class="t" style="top:104.34px;font-size:12px;line-height:12px;color:#3c3c3c;letter-spacing:-0.157px;left:584.30px;">Verbundene Spalten</span>
<span class="t" style="top:58.74px;font-size:12px;line-height:12px;color:#3c3c3c;letter-spacing:0.362px;left:718.40px;">Schattierte</span>
<span class="t" style="top:128.22px;font-size:11.2px;line-height:11.2px;color:#2e2e2e;letter-spacing:0.390px;left:558.50px;">Optionen für Tabellenformat</span>
<span class="t" style="top:159.39px;font-size:13.6px;line-height:13.6px;color:#222;letter-spacing:0.963px;left:18.50px;">Miller</span>
<span class="t" style="top:231.30px;font-size:14.8px;line-height:14.8px;color:#333;font-family:'Liberation Serif', serif;left:28.50px;width:40px;text-align:center;">D</span>
<span class="t" style="top:231.30px;font-size:14.8px;line-height:14.8px;color:#333;font-family:'Liberation Serif', serif;left:328.00px;width:40px;text-align:center;">G</span>
<span class="t" style="top:231.30px;font-size:14.8px;line-height:14.8px;color:#333;font-family:'Liberation Serif', serif;left:429.00px;width:40px;text-align:center;">H</span>
<span class="t" style="top:231.30px;font-size:14.8px;line-height:14.8px;color:#333;font-family:'Liberation Serif', serif;left:530.50px;width:40px;text-align:center;">I</span>
<span class="t" style="top:231.30px;font-size:14.8px;line-height:14.8px;color:#333;font-family:'Liberation Serif', serif;left:611.00px;width:40px;text-align:center;">J</span>
<span class="t" style="top:231.30px;font-size:14.8px;line-height:14.8px;color:#333;font-family:'Liberation Serif', serif;left:690.50px;width:40px;text-align:center;">K</span>
<div id="tip" class="abs"></div>
<span class="t" style="top:152.14px;font-size:12px;line-height:12px;color:#555;font-weight:700;letter-spacing:-0.051px;left:70.60px;">Datenschnitt einfügen</span>
<span class="t" style="top:173.34px;font-size:12px;line-height:12px;color:#595959;letter-spacing:-0.093px;left:70.30px;">Einen Datenschnitt verwenden,</span>
<span class="t" style="top:188.34px;font-size:12px;line-height:12px;color:#595959;letter-spacing:-0.009px;left:70.30px;">um Daten visuell zu filtern.</span>
<span class="t" style="top:218.14px;font-size:12px;line-height:12px;color:#595959;letter-spacing:0.008px;left:70.30px;">Mit Datenschnitten können Sie</span>
<span class="t" style="top:233.14px;font-size:12px;line-height:12px;color:#595959;letter-spacing:-0.044px;left:70.30px;">Tabellen, PivotTables, PivotCharts</span>
<span class="t" style="top:248.14px;font-size:12px;line-height:12px;color:#595959;letter-spacing:0.082px;left:70.30px;">und Cubefunktionen schneller</span>
<span class="t" style="top:263.14px;font-size:12px;line-height:12px;color:#595959;letter-spacing:0.108px;left:70.30px;">und einfacher filtern.</span>
</div>
</body>
</html>
